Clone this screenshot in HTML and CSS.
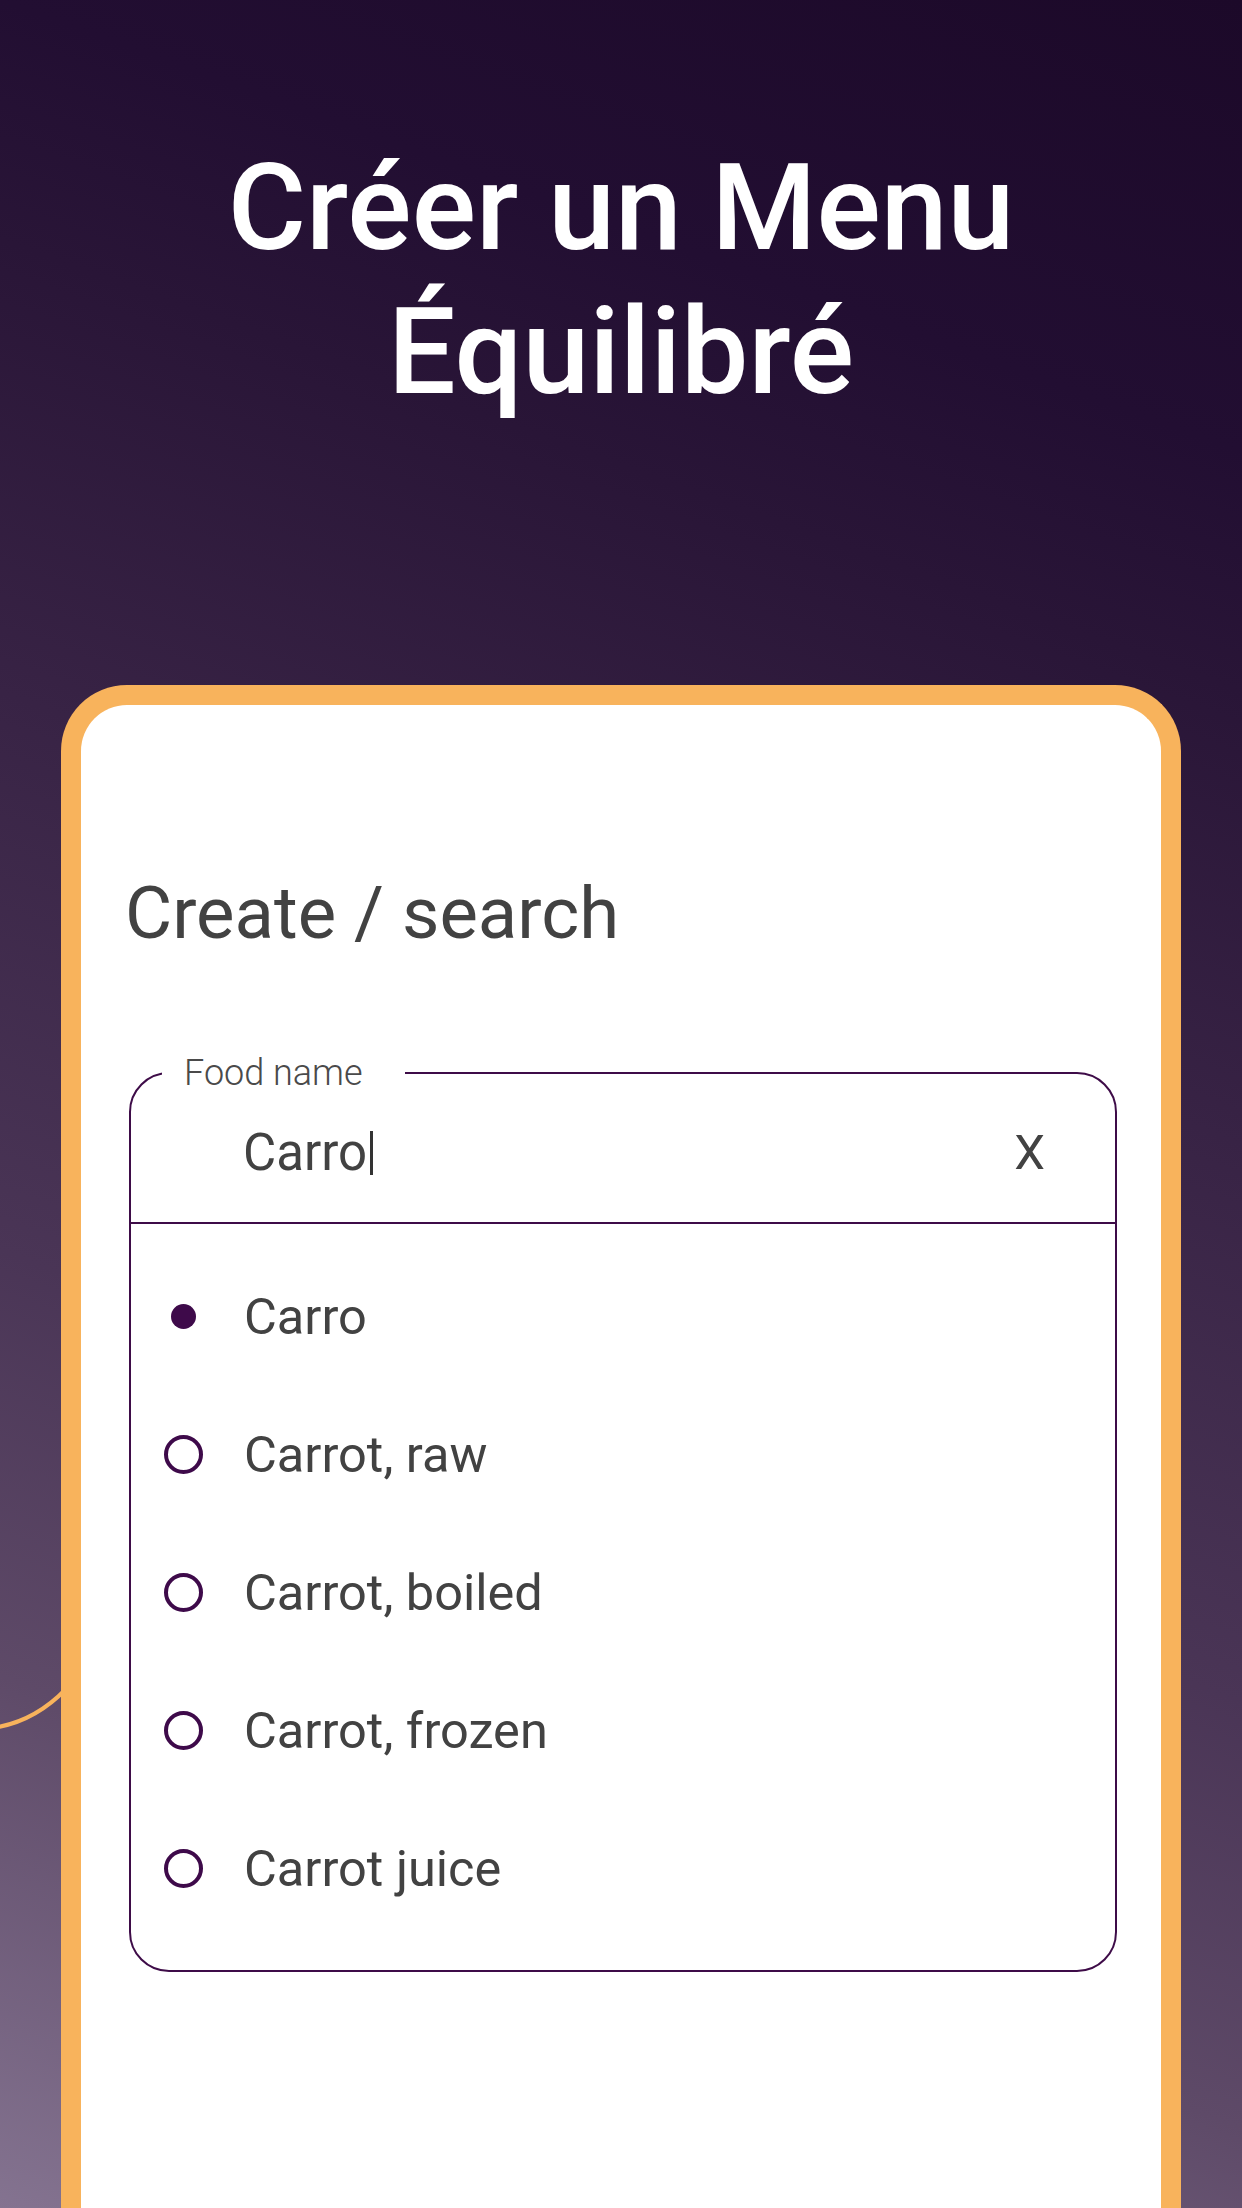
FILE: index.html
```html
<!DOCTYPE html>
<html lang="fr">
<head>
<meta charset="utf-8">
<title>Créer un Menu Équilibré</title>
<link rel="stylesheet" href="styles.css">
</head>
<body>
<div class="screen">
  <svg class="deco" width="80" height="60" viewBox="0 0 80 60" aria-hidden="true">
    <path d="M-2 41 Q36 34 66 3" fill="none" stroke="#f8b35c" stroke-width="4"/>
  </svg>
  <h1 class="title">Créer un Menu<br>Équilibré</h1>
  <section class="card">
    <h2 class="heading">Create / search</h2>
    <fieldset class="field">
      <legend class="field-label">Food name</legend>
      <div class="input-row">
        <span class="input-text">Carro</span><span class="caret"></span>
        <span class="clear">X</span>
      </div>
      <ul class="options">
        <li class="option"><span class="radio selected"></span><span class="option-text">Carro</span></li>
        <li class="option"><span class="radio"></span><span class="option-text">Carrot, raw</span></li>
        <li class="option"><span class="radio"></span><span class="option-text">Carrot, boiled</span></li>
        <li class="option"><span class="radio"></span><span class="option-text">Carrot, frozen</span></li>
        <li class="option"><span class="radio"></span><span class="option-text">Carrot juice</span></li>
      </ul>
    </fieldset>
  </section>
</div>
</body>
</html>
```
FILE: styles.css
```css
* { box-sizing: border-box; }
html, body { margin: 0; padding: 0; }
body { font-family: Roboto, "Noto Sans", "Liberation Sans", sans-serif; }

.screen {
  position: relative;
  width: 1242px;
  height: 2208px;
  overflow: hidden;
  padding-top: 136px;
  background: linear-gradient(200deg, #1c0929 0%, #220e32 17%, #291537 26%, #382345 43%, #4a3556 64%, #5e4a68 80%, #847390 100%);
}

.deco {
  position: absolute;
  left: 0;
  top: 1686px;
}

.title {
  margin: 0;
  color: #ffffff;
  font-size: 120px;
  line-height: 144px;
  font-weight: 500;
  text-align: center;
}

.card {
  position: relative;
  margin: 261px 61px 0;
  height: 1700px;
  background: #ffffff;
  border: 20px solid #f8b35c;
  border-bottom: 0;
  border-radius: 66px 66px 0 0;
  padding: 166px 44px 0 44px;
}

.heading {
  margin: 0;
  font-size: 72.5px;
  line-height: 86px;
  font-weight: 400;
  color: #424242;
}

.field {
  margin: 96px 0 0 4px;
  padding: 0;
  min-width: 0;
  border: 2px solid #3e0c48;
  border-radius: 40px;
}

.field-label {
  margin-left: 31px;
  padding: 0 42px 0 22px;
  font-size: 36px;
  line-height: 40px;
  font-weight: 300;
  color: #4a4a4a;
}

.input-row {
  display: flex;
  align-items: center;
  height: 131px;
  padding: 0 70px 10px 112px;
  border-bottom: 2px solid #3e0c48;
  font-size: 51px;
  color: #424242;
}

.caret {
  width: 3px;
  height: 44px;
  margin-left: 3px;
  background: #333333;
}

.clear {
  margin-left: auto;
  font-size: 49px;
}

.options {
  list-style: none;
  margin: 0;
  padding: 23px 0 33px;
}

.option {
  display: flex;
  align-items: center;
  height: 138px;
  padding-left: 33px;
  font-size: 50.5px;
  color: #424242;
}

.radio {
  position: relative;
  flex: none;
  width: 39px;
  height: 39px;
  border: 4px solid #3e0a4a;
  border-radius: 50%;
  margin-right: 41px;
}

.radio.selected {
  border-color: transparent;
}

.radio.selected::after {
  content: "";
  position: absolute;
  left: 3px;
  top: 3px;
  width: 25px;
  height: 25px;
  border-radius: 50%;
  background: #3e0a4a;
}
```
